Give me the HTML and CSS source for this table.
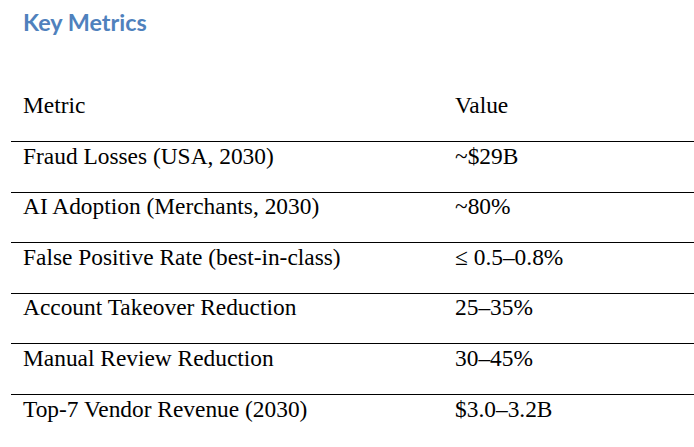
FILE: index.html
```html
<!DOCTYPE html>
<html lang="en">
<head>
<meta charset="utf-8">
<title>Key Metrics</title>
<link rel="stylesheet" href="styles.css">
</head>
<body>
<h2 class="title">Key Metrics</h2>
<table class="metrics">
  <thead>
    <tr><th class="col-metric">Metric</th><th class="col-value">Value</th></tr>
  </thead>
  <tbody>
    <tr><td>Fraud Losses (USA, 2030)</td><td>~$29B</td></tr>
    <tr><td>AI Adoption (Merchants, 2030)</td><td>~80%</td></tr>
    <tr><td>False Positive Rate (best-in-class)</td><td>≤ 0.5–0.8%</td></tr>
    <tr><td>Account Takeover Reduction</td><td>25–35%</td></tr>
    <tr><td>Manual Review Reduction</td><td>30–45%</td></tr>
    <tr><td>Top-7 Vendor Revenue (2030)</td><td>$3.0–3.2B</td></tr>
  </tbody>
</table>
</body>
</html>
```
FILE: styles.css
```css
html, body {
  margin: 0;
  padding: 0;
  background: #ffffff;
}

body {
  width: 694px;
  height: 447px;
  overflow: hidden;
}

.title {
  margin: 0;
  padding: 8px 0 0 23px;
  height: 91px;
  box-sizing: border-box;
  font-family: "Lato", "Open Sans", sans-serif;
  font-weight: 700;
  font-size: 23.4px;
  line-height: 28px;
  color: #4f81bd;
}

.metrics {
  margin-left: 11px;
  width: 683px;
  border-collapse: collapse;
  font-family: "Liberation Serif", "Times New Roman", serif;
  font-size: 23.4px;
  color: #000000;
  table-layout: fixed;
}

.metrics th,
.metrics td {
  height: 50.6px;
  box-sizing: border-box;
  padding: 0.5px 0 0 12px;
  vertical-align: top;
  text-align: left;
  font-weight: 400;
  line-height: 26px;
  white-space: nowrap;
}

.col-metric {
  width: 432px;
}

.metrics thead tr,
.metrics tbody tr:not(:last-child) {
  border-bottom: 1px solid #000000;
}
```
